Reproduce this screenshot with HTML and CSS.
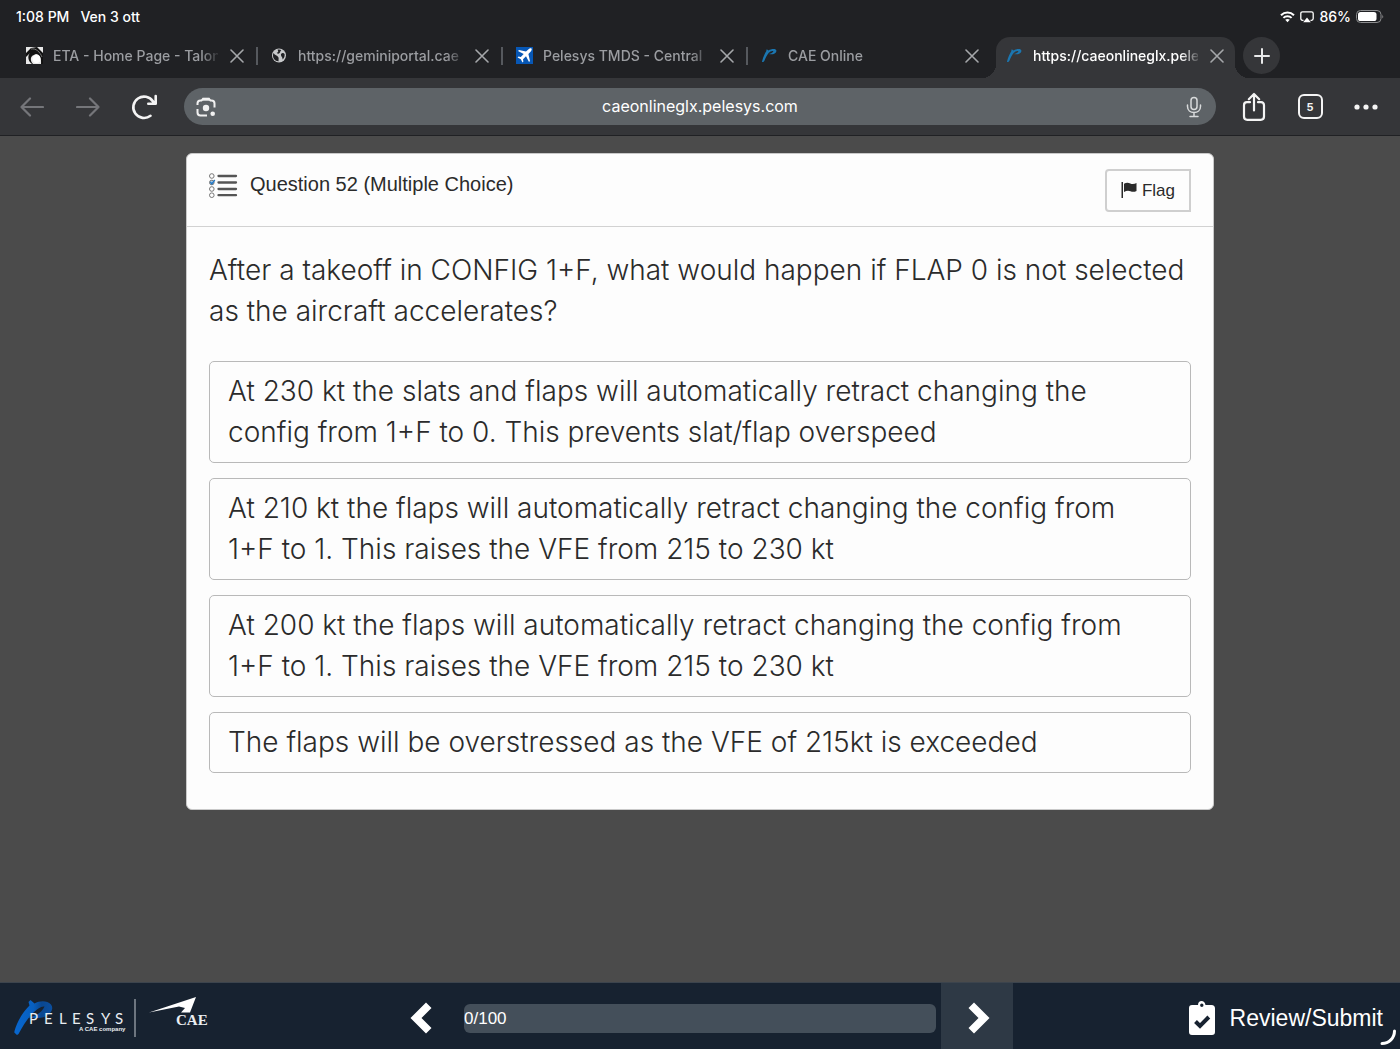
FILE: index.html
```html
<!DOCTYPE html>
<html lang="en">
<head>
<meta charset="utf-8">
<meta name="viewport" content="width=device-width, initial-scale=1">
<title>caeonlineglx.pelesys.com</title>
<link rel="stylesheet" href="styles.css">
</head>
<body>
<svg class="defs" width="0" height="0" aria-hidden="true">
  <symbol id="close" viewBox="0 0 14 14"><path d="M1 1l12 12M13 1L1 13" fill="none" stroke="currentColor" stroke-width="1.6" stroke-linecap="round"/></symbol>
  <symbol id="pfav" viewBox="0 0 18 18"><path d="M1 15.500C2.200 11 4 7 6 3.800L5 3.300L6.500 2.600L8 3.600C10.500 2 16.500 1 16.300 4.200C16.100 7.200 11.500 8.300 8.500 7.500C10.800 7 12.700 6 13.200 4.300C11 3.900 9.500 5 8.300 6.200C6 9 4.800 12 3.600 14.500C3 15.600 1.700 16.300 1 15.500Z" fill="#1b76b0"/></symbol>
</svg>

<header class="browser">
  <div class="status">
    <div class="status-left"><span>1:08 PM</span><span>Ven 3 ott</span></div>
    <div class="status-right">
      <svg width="15" height="12" viewBox="0 0 15 12" fill="none" stroke="#fff" stroke-width="2"><path d="M1 4.300C4.700.6 10.300.6 14 4.300M3.400 6.900C5.700 4.600 9.300 4.600 11.600 6.900"/><path d="M5.200 8.800C6.500 7.700 8.500 7.700 9.800 8.800L7.500 11.200Z" fill="#fff" stroke="none"/></svg>
      <svg width="14" height="12" viewBox="0 0 14 12"><path d="M3.500 9.300H2.500Q.8 9.300.8 7.600V2.400Q.8.8 2.500.8H11.500Q13.200.8 13.200 2.400V7.600Q13.200 9.300 11.500 9.300H10.500" fill="none" stroke="#fff" stroke-width="1.300"/><path d="M7 6.600L10.800 11.300H3.200Z" fill="#fff"/></svg>
      <span>86%</span>
      <svg width="28" height="13" viewBox="0 0 28 13"><rect x=".5" y=".5" width="24.500" height="12" rx="4" fill="none" stroke="#8b8c8e"/><rect x="2" y="2" width="18.500" height="9" rx="2.600" fill="#fff"/><path d="M26.300 4.500Q28 6.500 26.300 8.500Z" fill="#8b8c8e"/></svg>
    </div>
  </div>

  <nav class="tabs" aria-label="Open tabs">
    <div class="tab">
      <svg class="favicon" viewBox="0 0 17 17"><rect width="17" height="17" fill="#e8e8e8"/><path d="M0 6L5 1L11 0L17 6V17H15C16 9 11 5 8 8C4 9 4 14 7 17H6C1 13 2 8 4 6L0 10Z" fill="#111"/><path d="M5 2C10 1 14 5 16 10" fill="none" stroke="#777"/><circle cx="10.500" cy="12" r="4" fill="#fff"/></svg>
      <a href="#" class="tab-title">ETA - Home Page - Talon</a>
      <button class="close" aria-label="Close tab"><svg width="14" height="14"><use href="#close"/></svg></button>
    </div>
    <div class="tab">
      <svg class="favicon" viewBox="0 0 17 17"><circle cx="8" cy="8.500" r="7" fill="#c8c9cb"/><path d="M2.500 6C4 8.500 6 8 7.500 10.500C8 12 7 13.500 7.800 14.300C3 14.500 1 9.500 2.500 6ZM6.500 2.800C8 4.500 7 5.500 5.700 5.800C7 7.500 9 6.500 9.300 4.500L10.300 3C9 2.400 7.500 2.300 6.500 2.800ZM10 7C11.500 5.500 13 6 13.700 7.500C13.800 10 12.500 12 11.500 12.500C12 10 9.500 9.500 10 7Z" fill="#202124"/></svg>
      <a href="#" class="tab-title">https://geminiportal.cae</a>
      <button class="close" aria-label="Close tab"><svg width="14" height="14"><use href="#close"/></svg></button>
    </div>
    <div class="tab">
      <svg class="favicon" viewBox="0 0 17 17"><rect width="17" height="17" fill="#0757b5"/><path d="M15.500 1.500C14.500.8 13 1.700 12 2.700L10 4.600L3 3L2 4L7.700 7L4.800 10L2.500 9.600L1.600 10.500L4.800 12.200L6.500 15.400L7.400 14.500L7 12.200L10 9.300L13 15L14 14L12.400 7L14.300 5C15.300 4 16.200 2.300 15.500 1.500Z" fill="#fff"/></svg>
      <a href="#" class="tab-title">Pelesys TMDS - Central</a>
      <button class="close" aria-label="Close tab"><svg width="14" height="14"><use href="#close"/></svg></button>
    </div>
    <div class="tab">
      <svg class="favicon"><use href="#pfav"/></svg>
      <a href="#" class="tab-title">CAE Online</a>
      <button class="close" aria-label="Close tab"><svg width="14" height="14"><use href="#close"/></svg></button>
    </div>
    <div class="tab active">
      <svg class="favicon"><use href="#pfav"/></svg>
      <a href="#" class="tab-title" aria-current="page">https://caeonlineglx.pele</a>
      <button class="close" aria-label="Close tab"><svg width="14" height="14"><use href="#close"/></svg></button>
    </div>
    <button class="new-tab" aria-label="New tab"><svg width="16" height="16" viewBox="0 0 16 16"><path d="M8 1v14M1 8h14" stroke="#e8e9ea" stroke-width="2" stroke-linecap="round"/></svg></button>
  </nav>

  <div class="toolbar">
    <button class="tool dim" aria-label="Back"><svg width="24" height="20" viewBox="0 0 24 20"><path d="M23 10H1.500M10 1.500L1.500 10L10 18.500"/></svg></button>
    <button class="tool dim" aria-label="Forward"><svg width="24" height="20" viewBox="0 0 24 20"><path d="M1 10H22.500M14 1.500L22.500 10L14 18.500"/></svg></button>
    <button class="tool" aria-label="Reload"><svg width="26" height="26" viewBox="0 0 26 26"><path class="bold" d="M19.500 21.800A10.700 10.700 0 1 1 22 7.500L24 9.500M24.700 2V9.800H17.300"/></svg></button>
    <div class="omnibox">
      <button class="inner" aria-label="Search with camera"><svg width="20" height="20" viewBox="0 0 20 20" fill="none" stroke="#f1f1f1" stroke-width="2"><path d="M1.500 8V6.500Q1.500 3.500 4.500 3.500H5.500L7 2H13L14.500 3.500H15.500Q18.500 3.500 18.500 6.500V10.500M1.500 12V15.500Q1.500 18.500 4.500 18.500H11"/><path d="M6.500 2.200H13.500" stroke-width="3"/><circle cx="10" cy="11" r="3.200" fill="#f1f1f1" stroke="none"/><circle cx="16.700" cy="16.700" r="2.300" fill="#f1f1f1" stroke="none"/></svg></button>
      <input type="text" aria-label="Address" value="caeonlineglx.pelesys.com">
      <button class="inner" aria-label="Voice search"><svg width="16" height="22" viewBox="0 0 16 22" fill="none" stroke="#d8dadb" stroke-width="1.500" stroke-linecap="round"><rect x="5" y="1.500" width="6" height="12" rx="3"/><path d="M1.500 9V10.500C1.500 14.500 4.500 16.500 8 16.500S14.500 14.500 14.500 10.500V9M8 16.500V20.500M4 20.500H12"/></svg></button>
    </div>
    <button class="tool" aria-label="Share"><svg width="24" height="30" viewBox="0 0 24 30"><path d="M8 10.200H5Q2 10.200 2 13.200V24.500Q2 27.800 5.300 27.800H18.700Q22 27.800 22 24.500V13.200Q22 10.200 19 10.200H16M12 18.500V2M6.800 7.200L12 2L17.200 7.200"/></svg></button>
    <button class="tool" aria-label="Show tabs"><span class="tab-count">5</span></button>
    <button class="tool" aria-label="Menu"><svg class="dots" width="24" height="6" viewBox="0 0 24 6"><circle cx="3" cy="3" r="2.600"/><circle cx="12" cy="3" r="2.600"/><circle cx="21" cy="3" r="2.600"/></svg></button>
  </div>
</header>

<main>
  <section class="card">
    <div class="card-head">
      <svg width="30" height="26" viewBox="0 0 30 26"><g fill="#fff" stroke="#777" stroke-width="1"><circle cx="2.800" cy="3" r="2.300"/><circle cx="2.800" cy="9.500" r="2.300" fill="#a9cdec"/><circle cx="2.800" cy="16" r="2.300"/><circle cx="2.800" cy="22.200" r="2.300"/></g><path d="M1.300 9l1.500 2l3-4" fill="none" stroke="#2378c4" stroke-width="1.300"/><path d="M9.500 3H27M9.500 9.500H27M9.500 16H27M9.500 22.200H27" stroke="#555" stroke-width="2.300" stroke-linecap="round"/></svg>
      <h1>Question 52 (Multiple Choice)</h1>
      <button class="flag"><svg width="16" height="16" viewBox="0 0 16 16" fill="#2b2b2b"><path d="M.5 0H2V16H.5ZM3 1.800C5.500.2 7.500.6 9.300 1.500C11.500 2.400 13.500 2 15.500 1V9C13.500 10 11.500 10.200 9.500 9.300C7.500 8.300 5.500 8.500 3 10Z"/></svg>Flag</button>
    </div>
    <div class="card-body">
      <p class="question">After a takeoff in CONFIG 1+F, what would happen if FLAP 0 is not selected as the aircraft accelerates?</p>
      <div class="answers">
        <button class="answer">At 230 kt the slats and flaps will automatically retract changing the config from 1+F to 0. This prevents slat/flap overspeed</button>
        <button class="answer">At 210 kt the flaps will automatically retract changing the config from 1+F to 1. This raises the VFE from 215 to 230 kt</button>
        <button class="answer">At 200 kt the flaps will automatically retract changing the config from 1+F to 1. This raises the VFE from 215 to 230 kt</button>
        <button class="answer">The flaps will be overstressed as the VFE of 215kt is exceeded</button>
      </div>
    </div>
  </section>
</main>

<footer>
  <svg class="brand" width="200" height="44" viewBox="0 0 200 44">
    <defs><linearGradient id="swash" x1="0" y1="0" x2="1" y2="0"><stop offset="0" stop-color="#0867cf"/><stop offset=".5" stop-color="#075fc0"/><stop offset=".72" stop-color="#0a4790"/><stop offset="1" stop-color="#0b4f9f"/></linearGradient></defs>
    <path d="M.5 34C3 25 8 16 15.500 8.500L14.500 5L16.500 3L20.500 6.500C26 3.500 33 3.500 37 7.500C40.500 12 36 17.500 30 20C26 21.500 20 21 15 20.500C23 18.500 28.500 14.500 30.500 9.500C27 9 23 12 18.500 16.500C13 22 9 29 4.500 37L3 38L.3 35.500Z" fill="url(#swash)"/>
    <text class="brand-name" x="15 30 45 58 72 87 101" y="27">PELESYS</text>
    <text class="brand-sub" x="65" y="34">A CAE company</text>
    <path d="M121 2V40" stroke="#8b929a" stroke-width="1.500"/>
    <path d="M135 15.500L182 0L176 15.500H167L171 11L165 9.500Z" fill="#fff"/>
    <text class="brand-cae" x="162" y="28">CAE</text>
  </svg>
  <div class="pager">
    <button class="prev" aria-label="Previous question"><svg width="22" height="32" viewBox="0 0 22 32"><path d="M16 0.500L21.500 6L11.500 16L21.500 26L16 31.500L0.500 16Z" fill="#fff"/></svg></button>
    <div class="progress" role="progressbar" aria-valuenow="0" aria-valuemin="0" aria-valuemax="100">0/100</div>
    <button class="next" aria-label="Next question"><svg width="22" height="32" viewBox="0 0 22 32"><path d="M6 0.500L0.500 6L10.500 16L0.500 26L6 31.500L21.500 16Z" fill="#fff"/></svg></button>
  </div>
  <button class="review"><svg width="28" height="36" viewBox="0 0 28 36"><path fill-rule="evenodd" d="M4 5H10C10 2.500 11.500 1 13.500 1S17 2.500 17.500 5H23.500Q27 5 27 8.500V32Q27 35 24 35H4Q1 35 1 32V8Q1 5 4 5ZM13.800 3.500A1.700 1.700 0 1 0 13.800 6.900A1.700 1.700 0 1 0 13.800 3.500Z" fill="#fff"/><path d="M7.500 21.500L12 26L20.800 17" fill="none" stroke="#172230" stroke-width="4"/></svg>Review/Submit</button>
  <svg class="corner" width="18" height="18" viewBox="0 0 18 18"><path d="M2 14.500C9 14.500 14.500 9 14.500 2" fill="none" stroke="#fff" stroke-width="3" stroke-linecap="round"/></svg>
</footer>
</body>
</html>
```
FILE: styles.css
```css
* { box-sizing: border-box; }
body {
  margin: 0;
  min-height: 100vh;
  display: flex;
  flex-direction: column;
  background: #4b4b4b;
  color: #2b2b2b;
  font-family: "Liberation Sans", Arial, sans-serif;
}
button {
  margin: 0;
  padding: 0;
  border: 0;
  background: none;
  color: inherit;
  font: inherit;
}
svg { flex: none; display: block; }
.defs { position: absolute; }

/* Browser chrome */
.browser {
  background: #202124;
  color: #fff;
  font-family: Inter, sans-serif;
  font-size: 14px;
  font-weight: 500;
}
.status {
  height: 37px;
  padding: 0 16px 4px;
  display: flex;
  justify-content: space-between;
  align-items: center;
}
.status-left { display: flex; gap: 11px; }
.status-right { display: flex; align-items: center; gap: 5px; }

.tabs { display: flex; height: 41px; padding-left: 13px; }
.tab {
  flex: 0 1 245px;
  min-width: 0;
  height: 41px;
  padding: 0 14px 4px 13px;
  display: flex;
  align-items: center;
  color: #9b9da1;
  background: linear-gradient(#56595e, #56595e) right 10px / 2px 18px no-repeat;
}
.tab:nth-child(4) { background: none; }
.favicon { width: 17px; height: 17px; margin-right: 10px; }
.tab-title {
  flex: 1;
  min-width: 0;
  overflow: hidden;
  white-space: nowrap;
  color: inherit;
  text-decoration: none;
  line-height: 20px;
  -webkit-mask-image: linear-gradient(to right, #000 148px, transparent 168px);
  mask-image: linear-gradient(to right, #000 148px, transparent 168px);
}
.close { margin-left: 12px; color: #a5a7aa; }
.tab.active {
  position: relative;
  flex-basis: 239px;
  margin: 0 8px 0 3px;
  padding: 0 11px 4px 10px;
  color: #fff;
  background: #353639;
  border-radius: 14px 14px 0 0;
}
.tab.active::before,
.tab.active::after {
  content: "";
  position: absolute;
  bottom: 0;
  width: 14px;
  height: 14px;
}
.tab.active::before { right: 100%; background: radial-gradient(circle at 0 0, transparent 14px, #353639 14px); }
.tab.active::after { left: 100%; background: radial-gradient(circle at 100% 0, transparent 14px, #353639 14px); }
.new-tab {
  flex: none;
  width: 37px;
  height: 37px;
  border-radius: 50%;
  display: grid;
  place-items: center;
  background: #353639;
}

.toolbar {
  height: 58px;
  padding: 0 6px 0 4px;
  display: flex;
  align-items: center;
  background: #353639;
  border-bottom: 1px solid #202124;
}
.tool { flex: none; width: 56px; height: 56px; display: grid; place-items: center; }
.tool path {
  fill: none;
  stroke: #f4f4f4;
  stroke-width: 2.200;
  stroke-linecap: round;
  stroke-linejoin: round;
}
.tool .bold { stroke-width: 2.600; }
.tool.dim path { stroke: #75767a; }
.dots { fill: #f4f4f4; }
.omnibox {
  flex: 1;
  min-width: 0;
  height: 37px;
  margin: 0 10px 0 12px;
  padding: 0 10px;
  display: flex;
  align-items: center;
  border-radius: 19px;
  background: #5e6367;
}
.inner { flex: none; width: 24px; display: grid; place-items: center; }
.omnibox input {
  flex: 1;
  min-width: 0;
  padding: 0 0 2px;
  border: 0;
  outline: 0;
  background: none;
  color: #fff;
  font: 16px Inter, sans-serif;
  text-align: center;
}
.tab-count {
  width: 25px;
  height: 25px;
  display: grid;
  place-items: center;
  border: 2px solid #f4f4f4;
  border-radius: 6px;
  color: #f4f4f4;
  font-size: 11px;
  font-weight: 700;
}

/* Question card */
main { flex: 1; padding: 17px 16px; }
.card {
  max-width: 1028px;
  margin: 0 auto;
  background: #fdfdfd;
  border: 1px solid #c9c9c9;
  border-radius: 6px;
}
.card-head {
  display: flex;
  align-items: flex-start;
  padding: 15px 22px 14px;
  border-bottom: 1px solid #d2d2d2;
}
.card-head > svg { margin: 4px 11px 0 0; }
h1 {
  flex: 1;
  margin: 3px 0 0;
  font-size: 20px;
  line-height: 24px;
  font-weight: 400;
}
.flag {
  display: flex;
  align-items: center;
  justify-content: center;
  gap: 5px;
  width: 86px;
  height: 43px;
  border: 2px solid #cfcfcf;
  border-radius: 4px 0 0 4px;
  font-size: 17px;
}
.flag svg { margin-bottom: 2px; }
.card-body { padding: 23px 22px 36px; }
.question,
.answer {
  margin: 0;
  font-family: Inter, sans-serif;
  font-size: 28px;
  font-weight: 300;
  line-height: 41px;
}
.answers { display: flex; flex-direction: column; gap: 15px; margin-top: 29px; }
.answer {
  padding: 9px 60px 9px 18px;
  border: 1px solid #b9b9b9;
  border-radius: 5px;
  text-align: left;
}

/* Bottom bar */
footer {
  position: relative;
  height: 67px;
  display: grid;
  grid-template-columns: 1fr minmax(0, 626px) 1fr;
  align-items: center;
  background: #172230;
  border-top: 1px solid #3c444d;
  color: #fff;
}
.brand { margin: 6px 0 0 14px; fill: #e9edf1; }
.brand-name { font: 15px Lato, sans-serif; }
.brand-sub { font: 700 6px "Liberation Sans", sans-serif; }
.brand-cae { font: 700 15px "Liberation Serif", serif; }
.pager { display: flex; align-items: center; gap: 5px; height: 66px; }
.pager button {
  flex: none;
  width: 72px;
  height: 66px;
  display: grid;
  place-items: center;
}
.pager .prev { padding: 4px 4px 0 0; }
.pager .next { padding: 4px 0 0 4px; background: #2e3945; }
.progress {
  flex: 1;
  margin-top: 4px;
  border-radius: 6px;
  background: #444f5a;
  font-size: 17px;
  line-height: 29px;
}
.review {
  justify-self: end;
  display: flex;
  align-items: center;
  gap: 14px;
  margin: 4px 17px 0 0;
  font-size: 23px;
}
.corner { position: absolute; right: 2px; bottom: 2px; }
```
